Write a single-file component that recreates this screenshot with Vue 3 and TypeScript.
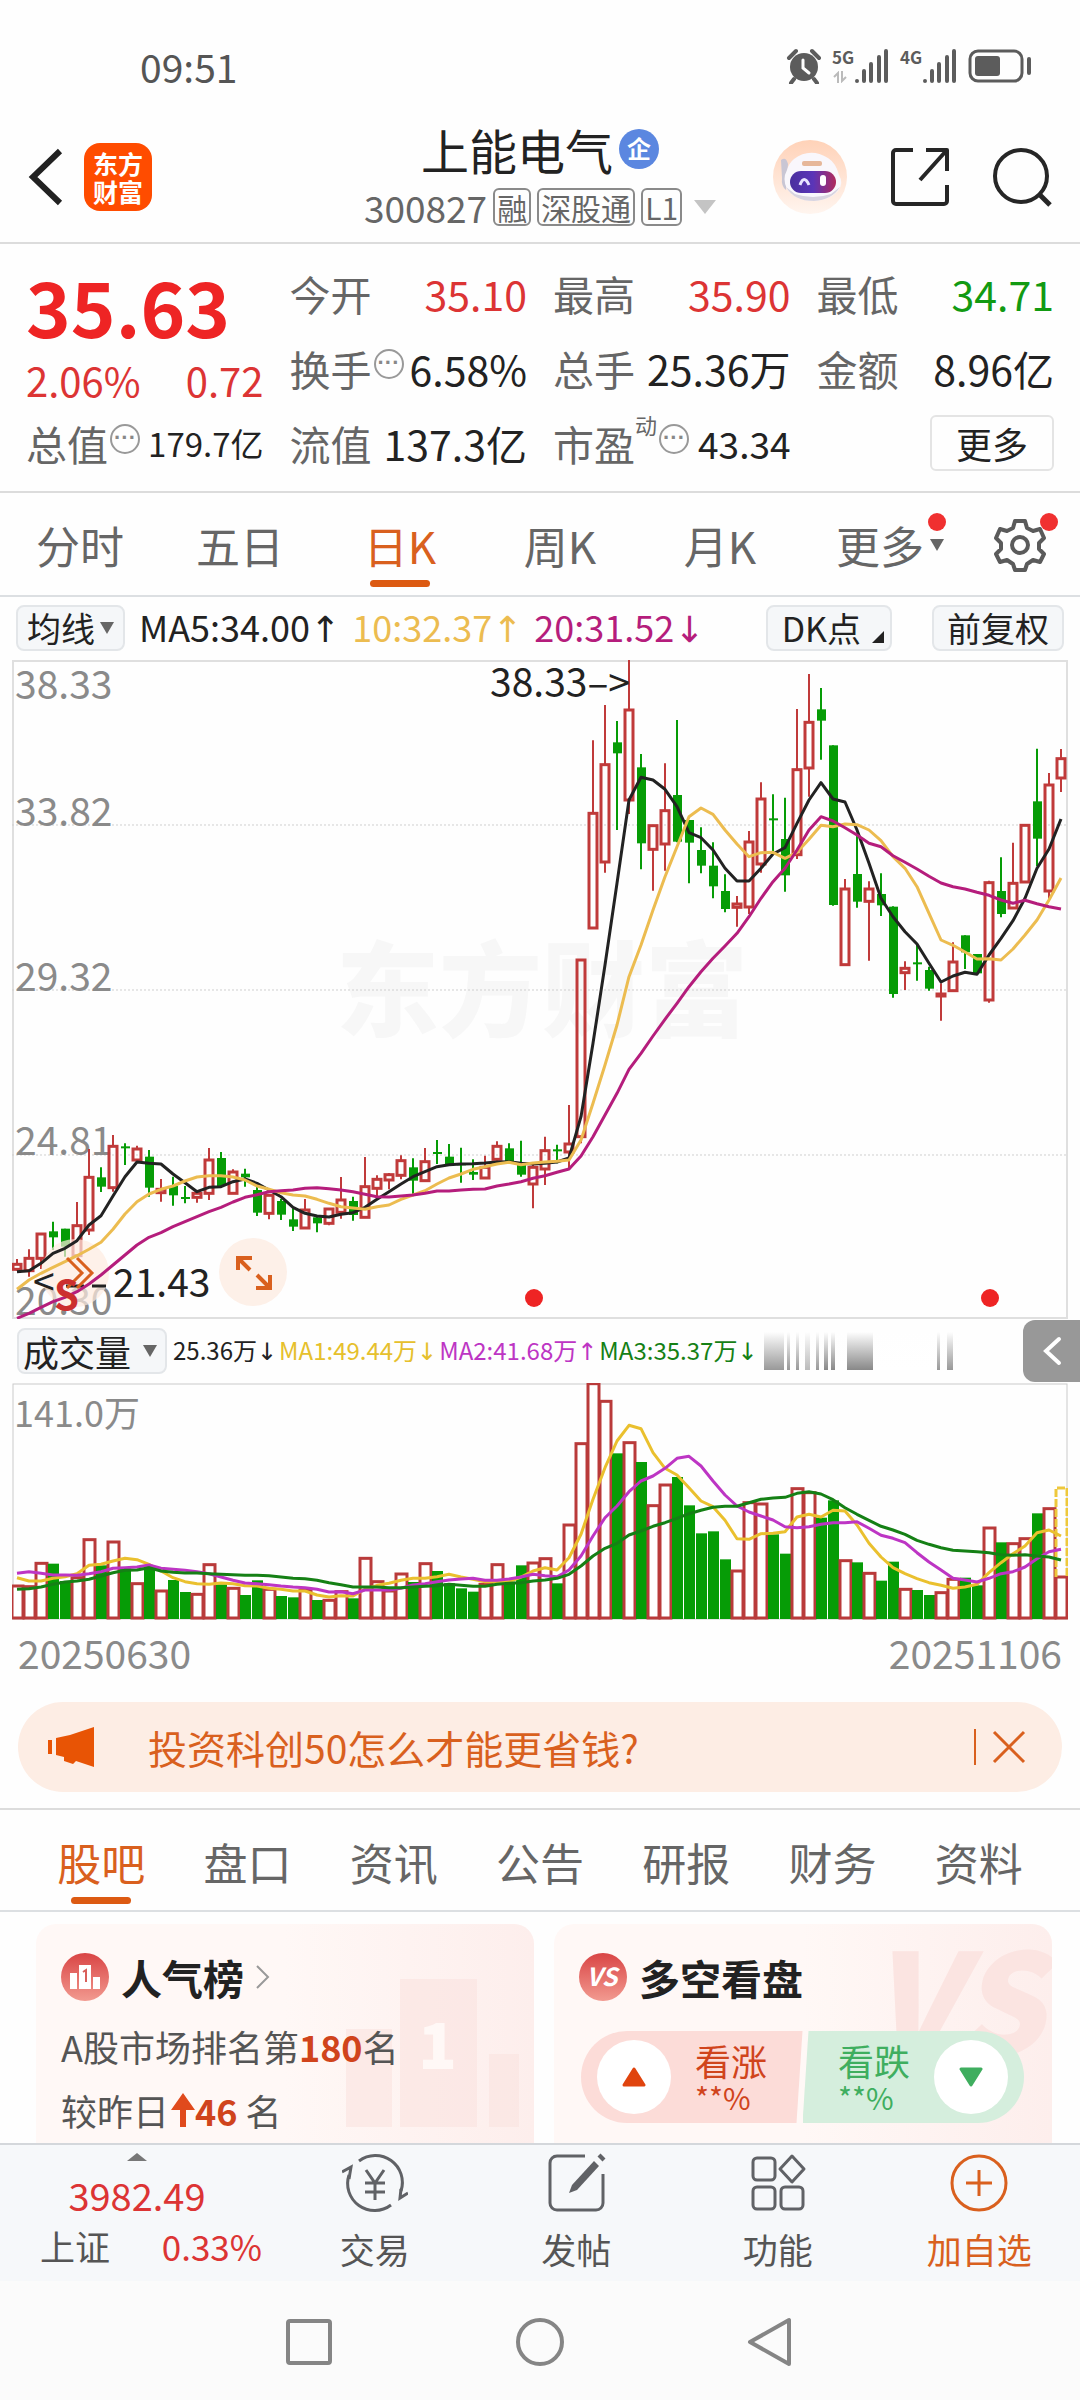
<script setup lang="ts">
import { ref } from 'vue'

type Bar = [high: number, top: number, bottom: number, low: number, up: 0 | 1]

const STEP = 12
const UNIT = 3
const LOWER = 1260

const centre = (i: number) => 5 + STEP * i

// Quiet sessions, measured from the lower band of the chart.
const quietBars: Bar[] = [
  [537, 553, 568, 572, 1], [508, 535, 572, 590, 1], [460, 462, 535, 567, 1], [425, 454, 472, 510, 0],
  [446, 446, 500, 530, 0], [366, 437, 527, 530, 1], [207, 292, 450, 465, 1], [262, 292, 320, 336, 0],
  [165, 199, 323, 335, 1], [190, 199, 205, 255, 0], [197, 207, 240, 247, 1], [210, 230, 323, 350, 0],
  [297, 328, 338, 365, 1], [290, 318, 346, 377, 0], [318, 351, 357, 370, 0], [335, 340, 352, 368, 1],
  [204, 240, 340, 360, 1], [216, 234, 318, 320, 0], [268, 276, 340, 342, 1], [266, 281, 292, 320, 0],
  [310, 330, 398, 408, 0], [342, 346, 400, 418, 1], [356, 363, 404, 420, 0], [385, 418, 440, 453, 0],
  [357, 390, 444, 446, 1], [410, 412, 430, 457, 0], [385, 387, 430, 436, 1], [291, 360, 397, 416, 1],
  [350, 363, 405, 422, 0], [231, 320, 412, 414, 1], [286, 298, 325, 350, 1], [279, 284, 300, 328, 1],
  [226, 242, 286, 298, 1], [235, 262, 302, 345, 0], [204, 245, 302, 304, 1], [180, 216, 222, 252, 0],
  [192, 230, 252, 255, 0], [203, 250, 256, 308, 0], [238, 276, 284, 300, 0], [227, 262, 294, 296, 1],
  [184, 199, 238, 242, 1], [190, 205, 245, 246, 0], [182, 250, 284, 290, 0], [255, 262, 312, 385, 1],
  [170, 212, 267, 315, 1], [194, 208, 214, 250, 0], [75, 192, 216, 265, 1],
]

const activeBars: Bar[] = [
  [900, 900, 1430, 1450, 1],
  [241, 460, 804, 804, 1], [135, 314, 606, 638, 1], [183, 247, 280, 510, 0], [0, 150, 420, 462, 1],
  [282, 322, 550, 628, 0], [495, 497, 568, 692, 1], [310, 452, 552, 632, 1], [180, 405, 545, 547, 0],
  [480, 480, 548, 670, 0], [502, 570, 617, 640, 0], [547, 617, 679, 715, 0], [643, 693, 747, 757, 0],
  [708, 732, 742, 800, 1], [513, 546, 741, 762, 1], [367, 417, 612, 638, 1], [403, 475, 481, 575, 0],
  [413, 537, 646, 695, 0], [147, 329, 584, 597, 1], [42, 187, 324, 410, 1], [84, 148, 182, 299, 0],
  [256, 256, 735, 737, 0], [657, 687, 914, 915, 1], [526, 642, 725, 743, 0], [664, 687, 724, 902, 1],
  [640, 702, 736, 768, 0], [739, 740, 1002, 1013, 0], [904, 925, 938, 990, 1], [855, 907, 913, 962, 0],
  [920, 930, 986, 992, 0], [970, 1002, 1008, 1082, 1], [847, 906, 992, 994, 1], [826, 826, 877, 927, 0],
  [882, 882, 940, 942, 0], [662, 668, 1020, 1028, 1], [592, 693, 762, 772, 0], [548, 670, 744, 745, 1],
  [494, 496, 666, 667, 1], [266, 424, 536, 618, 0], [339, 375, 693, 718, 1], [267, 296, 354, 396, 1],
]

const toCandle = (bar: Bar, i: number, base: number) => ({
  x: centre(i),
  high: (base + bar[0]) / UNIT,
  top: (base + bar[1]) / UNIT,
  bottom: (base + bar[2]) / UNIT,
  low: (base + bar[3]) / UNIT,
  up: bar[4] === 1,
})

const candles = [
  ...quietBars.map((b, i) => toCandle(b, i, LOWER)),
  ...activeBars.map((b, i) => toCandle(b, i + quietBars.length, 0)),
]

const points = (values: number[]) =>
  values.map((v, i) => `${centre(i)},${(v / UNIT).toFixed(1)}`).join(' ')

const average = (quiet: number[], active: number[]) => points([...quiet.map((v) => v + LOWER), ...active])

const ma5 = average(
  [575, 572, 550, 520, 505, 482, 435, 407, 348, 290, 246, 250, 252, 282, 308, 335, 322, 320, 305, 297, 310, 330, 350, 382,
    400, 408, 411, 403, 398, 382, 358, 335, 312, 290, 275, 260, 254, 252, 251, 249, 246, 245, 250, 252, 250, 246],
  [1494, 1370, 1150, 915, 670, 420, 352, 360, 388, 440, 518, 533, 570, 625, 663, 663, 625, 582, 563, 490, 420, 368, 417,
    426, 510, 610, 715, 770, 815, 852, 910, 966, 948, 937, 943, 885, 835, 782, 715, 625, 567, 477],
)
const ma10 = average(
  [628, 600, 580, 562, 545, 527, 508, 487, 448, 402, 365, 342, 328, 318, 303, 291, 287, 287, 291, 300, 318, 328, 338, 345,
    348, 358, 370, 380, 384, 388, 380, 375, 358, 345, 332, 312, 294, 282, 268, 260, 252, 247, 254, 249, 246, 244],
  [1500, 1440, 1330, 1215, 1095, 950, 855, 750, 650, 560, 470, 444, 463, 510, 552, 590, 578, 577, 595, 577, 538, 496, 500,
    492, 494, 510, 542, 590, 625, 680, 760, 840, 856, 876, 897, 896, 900, 867, 825, 780, 720, 654],
)
const ma20 = average(
  [715, 700, 682, 665, 652, 635, 612, 585, 555, 525, 495, 472, 458, 440, 425, 410, 395, 382, 366, 352, 344, 335, 332, 330,
    325, 323, 326, 330, 335, 343, 350, 351, 348, 345, 340, 333, 333, 330, 328, 327, 318, 312, 305, 295, 287, 277],
  [1527, 1488, 1430, 1365, 1300, 1228, 1180, 1128, 1078, 1030, 980, 935, 895, 858, 820, 770, 715, 665, 625, 570, 510, 470,
    483, 503, 525, 550, 560, 587, 607, 627, 649, 669, 680, 687, 697, 706, 720, 730, 721, 731, 740, 747],
)

const priceLabels = [
  { text: '38.33', y: 39 },
  { text: '33.82', y: 166 },
  { text: '29.32', y: 331 },
  { text: '24.81', y: 495 },
  { text: '20.30', y: 655 },
]
const gridLines = [165, 330, 495]

const VOLUME_TOP = 36
const volumeTops = [
  645, 647, 577, 578, 630, 620, 506, 583, 513, 592, 638, 585, 660, 627, 663, 670, 581, 640, 652, 672, 628, 655, 675, 679,
  658, 687, 688, 662, 682, 562, 632, 660, 609, 633, 578, 600, 637, 652, 662, 640, 581, 632, 583, 576, 563, 637, 462, 218,
  38, 91, 247, 215, 273, 404, 342, 318, 403, 487, 481, 565, 600, 395, 399, 490, 548, 353, 365, 440, 388, 569, 574, 607,
  629, 572, 655, 657, 672, 665, 625, 620, 643, 471, 514, 518, 503, 427, 413, 618,
]
const volumes = volumeTops.map((v, i) => ({
  x: centre(i),
  y: (v - VOLUME_TOP) / UNIT,
  up: candles[i].up,
}))

const volumeLine = (values: number[]) => points(values.map((v) => v - VOLUME_TOP))
const vol1 = volumeLine([
  620, 630, 630, 622, 617, 608, 583, 580, 570, 562, 566, 580, 600, 620, 632, 638, 640, 636, 638, 644, 645, 652, 655, 660,
  660, 672, 678, 674, 675, 655, 643, 637, 628, 622, 622, 617, 610, 618, 625, 632, 632, 632, 618, 600, 590, 597, 560, 490,
  385, 290, 210, 163, 173, 245, 292, 312, 350, 390, 407, 448, 503, 505, 488, 487, 482, 438, 430, 438, 418, 420, 462, 517,
  558, 590, 608, 623, 635, 643, 652, 648, 640, 605, 575, 548, 525, 485, 477, 495,
])
const vol2 = volumeLine([
  607, 602, 607, 612, 612, 613, 608, 602, 592, 590, 588, 582, 592, 595, 598, 602, 608, 618, 628, 636, 638, 641, 645, 648,
  650, 655, 663, 662, 668, 657, 657, 657, 652, 642, 638, 632, 627, 624, 622, 628, 628, 624, 618, 610, 614, 617, 597, 555,
  495, 440, 405, 362, 330, 315, 292, 262, 256, 285, 330, 372, 405, 423, 435, 447, 467, 470, 467, 460, 455, 455, 452, 472,
  493, 502, 515, 545, 573, 597, 622, 627, 633, 622, 608, 602, 588, 563, 542, 535,
])
const vol3 = volumeLine([
  655, 653, 648, 640, 633, 630, 625, 615, 605, 598, 597, 590, 600, 604, 606, 606, 608, 610, 611, 613, 613, 614, 618, 622,
  623, 628, 635, 641, 648, 648, 648, 650, 650, 648, 646, 644, 640, 643, 646, 646, 640, 637, 635, 630, 627, 622, 610, 585,
  555, 532, 517, 492, 480, 466, 455, 442, 428, 418, 409, 406, 406, 395, 385, 381, 379, 367, 362, 369, 386, 410, 430, 448,
  466, 477, 490, 508, 520, 530, 538, 540, 542, 545, 551, 553, 551, 555, 558, 567,
])

const periods = ['分时', '五日', '日K', '周K', '月K']
const period = ref('日K')
const sections = ['股吧', '盘口', '资讯', '公告', '研报', '财务', '资料']
const section = ref('股吧')
const noticeOpen = ref(true)
</script>

<template>
  <div class="page">
    <div class="status">
      <span class="clock">09:51</span>
      <div class="signals">
        <svg width="36" height="36" viewBox="0 0 36 36" fill="#5c5c5c">
          <circle cx="18" cy="19" r="14" />
          <path d="M3 10l7-7M33 10l-7-7M8 31l-3 4M28 31l3 4" stroke="#5c5c5c" stroke-width="4" stroke-linecap="round" />
          <path d="M17 12v8l6 5" stroke="#fff" stroke-width="3" fill="none" stroke-linecap="round" />
        </svg>
        <div class="network">
          <span>5G</span>
          <svg class="arrows" width="18" height="12" viewBox="0 0 18 12"><path d="M6 12V2L2 6M10 0v10l4-4" stroke="#bbb" stroke-width="2" fill="none" /></svg>
        </div>
        <svg width="36" height="36" viewBox="0 0 36 36" stroke="#5c5c5c" stroke-width="4" stroke-linecap="round"><path d="M3 33v0M10 33v-10M17 33v-17M25 33v-24M32 33v-30" /></svg>
        <div class="network"><span>4G</span></div>
        <svg width="36" height="36" viewBox="0 0 36 36" stroke="#5c5c5c" stroke-width="4" stroke-linecap="round"><path d="M3 33v0M10 33v-10M17 33v-17M25 33v-24M32 33v-30" /></svg>
        <svg class="battery" width="64" height="36" viewBox="0 0 64 36" fill="none">
          <rect x="2" y="3" width="52" height="30" rx="8" stroke="#5c5c5c" stroke-width="3" />
          <rect x="7" y="8" width="25" height="20" rx="3" fill="#5c5c5c" />
          <path d="M61 11v14" stroke="#5c5c5c" stroke-width="4" stroke-linecap="round" />
        </svg>
      </div>
    </div>

    <header class="header">
      <div class="head-side">
        <button class="icon-btn" aria-label="返回">
          <svg width="36" height="60" viewBox="0 0 36 60" fill="none" stroke="#222" stroke-width="6"><path d="M32 4L5 30L32 56" /></svg>
        </button>
        <a class="logo" href="#home"><span>东方</span><span>财富</span></a>
      </div>
      <div class="stock">
        <h1>上能电气<span class="corp">企</span></h1>
        <div class="code-row">
          <span class="code">300827</span>
          <span class="tag">融</span>
          <span class="tag">深股通</span>
          <span class="tag">L1</span>
          <svg class="caret" width="22" height="14" viewBox="0 0 22 14"><path d="M0 0h22L11 14z" fill="#c4c4c4" /></svg>
        </div>
      </div>
      <div class="head-side end">
        <button class="icon-btn" aria-label="助手">
          <svg width="76" height="76" viewBox="0 0 76 76">
            <defs>
              <linearGradient id="halo" x1="0" y1="0" x2="0" y2="1"><stop offset="0" stop-color="#ffd2b8" /><stop offset="1" stop-color="#fff5ef" /></linearGradient>
              <linearGradient id="visor" x1="0" y1="0" x2="1" y2="0"><stop offset="0" stop-color="#4a2f9e" /><stop offset=".5" stop-color="#5a35b8" /><stop offset="1" stop-color="#b02a5c" /></linearGradient>
            </defs>
            <circle cx="38" cy="38" r="37" fill="url(#halo)" />
            <path d="M9 21q5-4 7 4l-2 26q-5-4-4-12z" fill="#c9c6d4" />
            <path d="M22 20Q38 8 56 19Q64 24 67 36Q72 44 66 52Q58 61 42 62Q24 62 15 50Q10 40 15 31Q17 24 22 20z" fill="#f9f7fc" />
            <path d="M14 48q8 14 28 14q18-1 26-14l-9 7q-18 6-36 0z" fill="#d8d4e0" />
            <rect x="30" y="22" width="20" height="5" rx="2" fill="#e6b79a" />
            <rect x="18" y="32" width="46" height="22" rx="11" fill="url(#visor)" />
            <path d="M28 46q4-11 9 0" fill="none" stroke="#e8e4ff" stroke-width="3" />
            <rect x="48" y="36" width="6" height="11" rx="3" fill="#fff" />
          </svg>
        </button>
        <button class="icon-btn" aria-label="分享">
          <svg width="60" height="60" viewBox="0 0 60 60" fill="none" stroke="#262626" stroke-width="4" stroke-linejoin="round"><path d="M23 3H6a3 3 0 0 0-3 3v48a3 3 0 0 0 3 3h48a3 3 0 0 0 3-3V38" /><path d="M36 3h21v21M56 4L30 33" /></svg>
        </button>
        <button class="icon-btn" aria-label="搜索">
          <svg width="60" height="60" viewBox="0 0 60 60" fill="none" stroke="#262626" stroke-width="4"><circle cx="29" cy="29" r="26" /><path d="M47 47l11 11" stroke-width="5" /></svg>
        </button>
      </div>
    </header>

    <section class="quote">
      <div class="col first">
        <strong class="price">35.63</strong>
        <div class="cell change"><span>2.06%</span><span>0.72</span></div>
        <div class="cell">
          <span class="name">总值<i class="dots">···</i></span><span class="small">179.7亿</span>
        </div>
      </div>
      <div class="col">
        <div class="cell"><span class="name">今开</span><span class="red">35.10</span></div>
        <div class="cell"><span class="name">换手<i class="dots">···</i></span><span>6.58%</span></div>
        <div class="cell"><span class="name">流值</span><span>137.3亿</span></div>
      </div>
      <div class="col">
        <div class="cell"><span class="name">最高</span><span class="red">35.90</span></div>
        <div class="cell"><span class="name">总手</span><span>25.36万</span></div>
        <div class="cell"><span class="name">市盈<sup>动</sup><i class="dots">···</i></span><span class="mid">43.34</span></div>
      </div>
      <div class="col">
        <div class="cell"><span class="name">最低</span><span class="green">34.71</span></div>
        <div class="cell"><span class="name">金额</span><span>8.96亿</span></div>
        <div class="cell more-cell"><button class="more">更多</button></div>
      </div>
    </section>

    <nav class="periods">
      <button v-for="p in periods" :key="p" class="tab" :class="{ on: p === period }" @click="period = p">{{ p }}</button>
      <button class="tab with-dot">更多<span class="tri" /><span class="dot" /></button>
      <button class="tab gear" aria-label="设置">
        <svg width="54" height="56" viewBox="0 0 54 56" fill="none" stroke="#5a5a5a" stroke-width="4" stroke-linejoin="round">
          <path d="M22 4h10l2 7l6 3l7-2l4 9l-5 5v6l5 5l-4 8l-7-2l-6 4l-2 6H22l-2-6l-6-4l-7 2l-4-8l5-5v-6l-5-5l4-9l7 2l6-3z" />
          <circle cx="27" cy="28" r="8" />
        </svg>
        <span class="dot" />
      </button>
    </nav>

    <div class="indicators">
      <button class="chip">均线<span class="tri" /></button>
      <div class="ma-values">
        <span class="black">MA5:34.00<b class="arrow">↑</b></span>
        <span class="gold">10:32.37<b class="arrow">↑</b></span>
        <span class="magenta">20:31.52<b class="arrow">↓</b></span>
      </div>
      <button class="chip dk">DK点<span class="corner" /></button>
      <button class="chip wide">前复权</button>
    </div>

    <div class="chart">
      <svg viewBox="0 0 1056 659" class="plot">
        <rect x="1" y="1" width="1054" height="657" fill="none" stroke="#dfdfdf" stroke-width="2" />
        <text class="watermark" x="324" y="369">东方财富</text>
        <line v-for="y in gridLines" :key="y" x1="0" x2="1056" :y1="y" :y2="y" stroke="#cfcfcf" stroke-dasharray="2 2" />
        <text v-for="l in priceLabels" :key="l.text" class="axis" x="3" :y="l.y">{{ l.text }}</text>
        <g v-for="c in candles" :key="c.x" :stroke="c.up ? '#c03a3a' : '#069c06'" stroke-width="3">
          <template v-if="c.up">
            <path :d="`M${c.x} ${c.high}V${c.top}M${c.x} ${c.bottom}V${c.low}`" stroke-width="2" />
            <rect :x="c.x - 4" :y="c.top" width="8" :height="c.bottom - c.top" fill="none" />
          </template>
          <template v-else>
            <path :d="`M${c.x} ${c.high}V${c.low}`" stroke-width="2" />
            <rect :x="c.x - 4" :y="c.top" width="9" :height="c.bottom - c.top" fill="#069c06" stroke="none" />
          </template>
        </g>
        <circle cx="63" cy="613" r="34" fill="#fdebe0" opacity=".7" />
        <text class="note" x="478" y="37">38.33–&gt;</text>
        <text class="note" x="21" y="636">&lt;</text>
        <path d="M54 626h18M80 626h14" stroke="#222" stroke-width="3" />
        <text class="note" x="101" y="637">21.43</text>
        <g fill="none" stroke-width="3" stroke-linejoin="round">
          <polyline :points="ma5" stroke="#222" />
          <polyline :points="ma10" stroke="#ecbc50" />
          <polyline :points="ma20" stroke="#b51d7c" />
        </g>
        <path d="M55 598l15 15l-15 15M65 598l15 15l-15 15" fill="none" stroke="#d9601e" stroke-width="3" />
        <text class="sell" x="42" y="650">S</text>
        <circle cx="522" cy="638" r="9" fill="#ee2424" />
        <circle cx="978" cy="638" r="9" fill="#ee2424" />
      </svg>
      <button class="expand" aria-label="展开">
        <svg width="68" height="68" viewBox="0 0 68 68" fill="none" stroke="#d9601e" stroke-width="4"><path d="M19 32V20h14M20 21l11 11M51 37v13H37M50 49L38 37" /></svg>
      </button>
    </div>

    <div class="volume-head">
      <button class="chip">成交量<span class="tri" /></button>
      <div class="vol-values">
        <span class="black">25.36万<b class="arrow">↓</b></span>
        <span class="yellow">MA1:49.44万<b class="arrow">↓</b></span>
        <span class="violet">MA2:41.68万<b class="arrow">↑</b></span>
        <span class="deep">MA3:35.37万<b class="arrow">↓</b></span>
      </div>
      <div class="streaks" />
      <button class="collapse" aria-label="收起">
        <svg width="20" height="30" viewBox="0 0 20 30" fill="none" stroke="#fff" stroke-width="4" stroke-linecap="round"><path d="M17 3L4 15L17 27" /></svg>
      </button>
    </div>

    <div class="volume">
      <svg viewBox="0 0 1056 237" class="plot">
        <rect x="1" y="1" width="1054" height="235" fill="none" stroke="#cacaca" />
        <text class="vol-axis" x="2" y="44">141.0万</text>
        <template v-for="v in volumes" :key="v.x">
          <rect v-if="v.up" :x="v.x - 5" :y="v.y" width="11" :height="235 - v.y" fill="#fff" stroke="#b93a3a" stroke-width="3" />
          <rect v-else :x="v.x - 5" :y="v.y" width="11" :height="236 - v.y" fill="#069c06" />
        </template>
        <path d="M1044 194V105h11v89" fill="none" stroke="#eec83c" stroke-width="3" stroke-dasharray="8 2" />
        <g fill="none" stroke-width="3" stroke-linejoin="round">
          <polyline :points="vol1" stroke="#eac02e" />
          <polyline :points="vol2" stroke="#bd35c4" />
          <polyline :points="vol3" stroke="#158015" />
        </g>
      </svg>
      <div class="dates"><span>20250630</span><span>20251106</span></div>
    </div>

    <div v-if="noticeOpen" class="notice">
      <svg width="46" height="42" viewBox="0 0 46 42" fill="#e85405"><path d="M0 14h4v14H0zM8 12l14-3L46 1v40l-18-6l-3 3l-9-3v-4l-8-2z" /></svg>
      <a href="#notice">投资科创50怎么才能更省钱?</a>
      <span class="bar" />
      <button class="icon-btn" aria-label="关闭" @click="noticeOpen = false">
        <svg width="34" height="34" viewBox="0 0 34 34" stroke="#d9601e" stroke-width="3"><path d="M2 2l30 30M32 2L2 32" /></svg>
      </button>
    </div>

    <nav class="sections">
      <button v-for="s in sections" :key="s" class="tab" :class="{ on: s === section }" @click="section = s">{{ s }}</button>
    </nav>

    <main class="cards">
      <article class="card">
        <svg class="deco" width="250" height="219" viewBox="0 0 250 219">
          <defs><linearGradient id="wash" x1="0" y1="0" x2="1" y2="0"><stop offset="0" stop-color="#fdeeec" stop-opacity="0" /><stop offset="1" stop-color="#fdeeec" /></linearGradient></defs>
          <rect width="250" height="219" fill="url(#wash)" />
          <path d="M116 55h77v148h-77zM62 105h46v98H62zM205 130h30v73h-30z" fill="#fae2df" opacity=".6" />
          <text x="134" y="145" font-size="64" font-weight="900" fill="#fff8f6">1</text>
        </svg>
        <h2>
          <svg width="48" height="48" viewBox="0 0 48 48">
            <defs><linearGradient id="badge" x1="0" y1="0" x2="0" y2="1"><stop offset="0" stop-color="#d94545" /><stop offset="1" stop-color="#f29a90" /></linearGradient></defs>
            <circle cx="24" cy="24" r="24" fill="url(#badge)" />
            <path d="M9 20h7v16H9zM18 12h12v24H18zM32 24h7v12h-7z" fill="#fff" />
            <path d="M22 19l3-2v12" fill="none" stroke="#d95f5a" stroke-width="2" />
          </svg>
          人气榜
          <svg width="14" height="24" viewBox="0 0 14 24" fill="none" stroke="#999" stroke-width="2"><path d="M1 1l11 11L1 23" /></svg>
        </h2>
        <p>A股市场排名第<b>180</b>名</p>
        <p>较昨日<svg class="up" width="24" height="34" viewBox="0 0 24 34" fill="#e04a1c"><path d="M12 0l12 17h-9v17H9V17H0z" /></svg><b>46</b> 名</p>
      </article>
      <article class="card">
        <svg class="deco" width="250" height="219" viewBox="0 0 250 219">
          <rect width="250" height="219" fill="url(#wash)" />
          <text x="66" y="130" font-size="138" font-style="italic" font-weight="900" fill="#fbe4e1">VS</text>
        </svg>
        <h2>
          <svg width="48" height="48" viewBox="0 0 48 48"><circle cx="24" cy="24" r="24" fill="url(#badge)" /><text x="23" y="33" text-anchor="middle" font-size="25" font-style="italic" font-weight="700" fill="#fff">VS</text></svg>
          多空看盘
        </h2>
        <div class="vote">
          <button class="bull">
            <span class="disc"><svg width="24" height="20" viewBox="0 0 24 20"><path d="M12 2L22 18H2z" fill="#e0440e" stroke="#e0440e" stroke-width="3" stroke-linejoin="round" /></svg></span>
            <span class="vote-text"><span>看涨</span><small>**%</small></span>
          </button>
          <button class="bear">
            <span class="vote-text"><span>看跌</span><small>**%</small></span>
            <span class="disc"><svg width="24" height="20" viewBox="0 0 24 20"><path d="M12 18L22 2H2z" fill="#3fae5f" stroke="#3fae5f" stroke-width="3" stroke-linejoin="round" /></svg></span>
          </button>
        </div>
      </article>
    </main>

    <footer class="dock">
      <button class="index">
        <svg width="20" height="8" viewBox="0 0 20 8"><path d="M0 8L10 0l10 8z" fill="#777" /></svg>
        <span class="points">3982.49</span>
        <span class="index-row"><span>上证</span><span class="red">0.33%</span></span>
      </button>
      <button class="action">
        <svg width="66" height="60" viewBox="0 0 66 60" fill="none" stroke="#606266" stroke-width="3">
          <path d="M17 8a27 27 0 0 1 42 30M49 52A27 27 0 0 1 7 22" /><path d="M0 19l9-5l-2 12M66 40l-8 5l1-9" />
          <path d="M24 17l9 13l9-13M33 30v17M23 30h20M23 39h20" />
        </svg>
        交易
      </button>
      <button class="action">
        <svg width="60" height="60" viewBox="0 0 60 60" fill="none" stroke="#606266" stroke-width="3"><path d="M39 3H11a7 7 0 0 0-7 7v40a7 7 0 0 0 7 7h39a7 7 0 0 0 7-7V21" /><path d="M23 40l3-8L48 8l5 5l-22 24z" fill="#606266" stroke="none" /><path d="M54 6l3-3" stroke-width="7" /></svg>
        发帖
      </button>
      <button class="action">
        <svg width="60" height="60" viewBox="0 0 60 60" fill="none" stroke="#606266" stroke-width="3"><rect x="5" y="5" width="22" height="22" rx="4" /><rect x="5" y="34" width="22" height="22" rx="4" /><rect x="33" y="34" width="22" height="22" rx="4" /><path d="M44 3l12 13l-12 13l-12-13z" stroke-linejoin="round" /></svg>
        功能
      </button>
      <button class="action hot">
        <svg width="60" height="60" viewBox="0 0 60 60" fill="none" stroke="#d9601e" stroke-width="3"><circle cx="30" cy="30" r="27" /><path d="M30 17v26M17 30h26" /></svg>
        加自选
      </button>
    </footer>

    <nav class="system">
      <button class="icon-btn" aria-label="最近任务"><svg width="50" height="50" viewBox="0 0 50 50" fill="none" stroke="#858585" stroke-width="4"><rect x="4" y="4" width="42" height="42" rx="2" /></svg></button>
      <button class="icon-btn" aria-label="主屏幕"><svg width="50" height="50" viewBox="0 0 50 50" fill="none" stroke="#858585" stroke-width="4"><circle cx="25" cy="25" r="22" /></svg></button>
      <button class="icon-btn" aria-label="后退"><svg width="50" height="50" viewBox="0 0 50 50" fill="none" stroke="#858585" stroke-width="4" stroke-linejoin="round"><path d="M43 3v44L4 25z" /></svg></button>
    </nav>
  </div>
</template>

<style>
body {
  background: #fff;
}
</style>

<style scoped>
.page {
  font-family: "Noto Sans CJK SC", "Noto Sans", sans-serif;
  color: #222;
  background: #fefefe;
}
.page *,
.page {
  box-sizing: border-box;
}
button {
  font-family: inherit;
  font-size: inherit;
  color: inherit;
  background: none;
  border: 0;
  padding: 0;
  margin: 0;
  line-height: inherit;
}
a {
  color: inherit;
  text-decoration: none;
}
h1,
h2,
p {
  margin: 0;
}
svg {
  display: block;
}
.red {
  color: #dc3434;
}
.green {
  color: #129a12;
}
.black {
  color: #222;
}
.gold {
  color: #ecbc50;
}
.magenta {
  color: #b51d7c;
}
.yellow {
  color: #e6c02c;
}
.violet {
  color: #bd35c4;
}
.deep {
  color: #158015;
}
.arrow {
  font-family: "DejaVu Sans", sans-serif;
  font-weight: 400;
}

.status {
  display: flex;
  justify-content: space-between;
  align-items: center;
  padding: 36px 48px 31px 140px;
}
.clock {
  font-size: 39px;
  line-height: 60px;
  color: #555;
}
.signals {
  display: flex;
  align-items: center;
}
.network {
  width: 22px;
  height: 36px;
  margin-left: 10px;
  font-size: 17px;
  font-weight: 700;
  line-height: 18px;
  color: #5c5c5c;
}
.arrows {
  margin-top: 5px;
}
.battery {
  margin-left: 10px;
}

.header {
  display: grid;
  grid-template-columns: 1fr auto 1fr;
  align-items: center;
  padding: 0 28px 16px;
  border-bottom: 2px solid #dcdcdc;
}
.head-side {
  display: flex;
  align-items: center;
  gap: 20px;
}
.head-side.end {
  justify-content: flex-end;
  gap: 42px;
}
.logo {
  display: flex;
  flex-direction: column;
  justify-content: center;
  align-items: center;
  width: 68px;
  height: 68px;
  border-radius: 16px;
  background: #ff4c00;
  color: #fff;
  font-weight: 700;
  font-size: 25px;
  line-height: 28px;
}
.stock {
  display: flex;
  flex-direction: column;
  align-items: center;
}
h1 {
  display: flex;
  align-items: center;
  gap: 6px;
  font-size: 48px;
  font-weight: 400;
  line-height: 44px;
  padding-bottom: 17px;
}
.corp {
  width: 40px;
  height: 40px;
  border-radius: 50%;
  background: #5b87e0;
  color: #fff;
  font-size: 24px;
  line-height: 38px;
  font-weight: 700;
  text-align: center;
}
.code-row {
  display: flex;
  align-items: center;
  gap: 6px;
  color: #666;
}
.code {
  font-size: 37px;
  line-height: 38px;
}
.tag {
  border: 2px solid #8a8a8a;
  border-radius: 6px;
  padding: 0 2px;
  font-size: 30px;
  line-height: 34px;
}
.caret {
  margin-left: 6px;
}
.page .icon-btn {
  display: block;
}

.quote {
  display: grid;
  grid-template-columns: repeat(4, 1fr);
  gap: 26px;
  padding: 11px 26px;
  border-bottom: 2px solid #dcdcdc;
}
.cell {
  display: flex;
  justify-content: space-between;
  align-items: center;
  height: 75px;
  font-size: 41px;
  line-height: 60px;
  white-space: nowrap;
}
.name {
  display: flex;
  align-items: center;
  color: #666;
}
.price {
  display: block;
  font-size: 76px;
  line-height: 100px;
  color: #ee2424;
}
.change {
  font-size: 40px;
  height: 50px;
  color: #dc3434;
}
.small {
  font-size: 33px;
}
.mid {
  font-size: 37px;
}
.dots {
  width: 30px;
  height: 30px;
  margin: 0 0 8px 2px;
  border: 2px solid #999;
  border-radius: 50%;
  font: 700 22px/24px "Liberation Sans", sans-serif;
  text-align: center;
  color: #888;
}
sup {
  font-size: 22px;
  line-height: 22px;
  align-self: flex-start;
}
.more-cell {
  justify-content: flex-end;
}
.more {
  width: 124px;
  border: 2px solid #e4e4e4;
  border-radius: 6px;
  font-size: 36px;
  line-height: 52px;
}

.periods,
.sections {
  display: flex;
  border-bottom: 2px solid #dcdfe2;
}
.periods {
  padding: 12px 0 8px;
}
.tab {
  position: relative;
  flex: 1 1 0;
  padding: 10px 0 12px;
  font-size: 44px;
  line-height: 60px;
  color: #666;
  text-align: center;
}
.tab.on {
  color: #d9601e;
}
.tab.on::after {
  content: "";
  position: absolute;
  left: calc(50% - 30px);
  bottom: 0;
  width: 60px;
  height: 7px;
  border-radius: 4px;
  background: #dc5a12;
}
.tri {
  display: inline-block;
  border: 7px solid transparent;
  border-top: 12px solid #666;
  border-bottom: 0;
}
.with-dot .tri {
  position: absolute;
  right: 16px;
  top: 34px;
}
.dot {
  position: absolute;
  right: 14px;
  top: 8px;
  width: 18px;
  height: 18px;
  border-radius: 50%;
  background: #f03030;
}
.tab.gear {
  display: flex;
  flex-grow: 0.75;
  justify-content: center;
  align-items: center;
}
.gear .dot {
  right: 22px;
}

.indicators,
.volume-head {
  display: flex;
  align-items: center;
}
.indicators {
  padding: 8px 16px 9px;
  gap: 14px;
}
.chip {
  display: flex;
  align-items: center;
  gap: 5px;
  padding: 0 9px;
  border: 2px solid #e3e6e9;
  border-radius: 8px;
  background: #f5f7f9;
  font-size: 34px;
  line-height: 42px;
  white-space: nowrap;
}
.ma-values {
  display: flex;
  gap: 12px;
  font-size: 36px;
  line-height: 42px;
  white-space: nowrap;
}
.dk {
  margin-left: auto;
  margin-right: 26px;
  padding: 0 6px 0 14px;
}
.wide {
  padding: 0 13px;
}
.corner {
  align-self: flex-end;
  margin: 0 0 6px 6px;
  border-left: 12px solid transparent;
  border-bottom: 12px solid #222;
}

.chart {
  position: relative;
  padding: 0 12px;
}
.plot {
  width: 100%;
  height: auto;
}
.axis {
  font-size: 39px;
  fill: #8a8a8a;
}
.vol-axis {
  font-size: 36px;
  fill: #8a8a8a;
}
.note {
  font-size: 39px;
  fill: #222;
}
.sell {
  font-size: 40px;
  font-weight: 700;
  fill: #cc2f2f;
}
.watermark {
  font-size: 103px;
  font-weight: 900;
  fill: #f7f7f7;
}
.expand {
  position: absolute;
  left: calc(20% + 3px);
  bottom: 2%;
  width: 68px;
  height: 68px;
  border-radius: 50%;
  background: #fdf0e8;
}

.volume-head {
  padding: 1px 0 1px 17px;
  gap: 6px;
}
.volume-head .chip {
  gap: 12px;
  padding: 0 8px 0 4px;
  font-size: 36px;
}
.vol-values {
  display: flex;
  gap: 2px;
  font-size: 24px;
  line-height: 36px;
  white-space: nowrap;
}
.streaks {
  width: 196px;
  height: 38px;
  background:
    linear-gradient(#fefefe, transparent),
    linear-gradient(90deg, #999 0 20px, #fff 20px 23px, #999 23px 26px, #fff 26px 32px, #999 32px 35px, #fff 35px 41px, #bbb 41px 46px, #fff 46px 52px, #999 52px 55px, #fff 55px 60px, #888 60px 64px, #fff 64px 67px, #888 67px 71px, #fff 71px 83px, #888 83px 109px, #fff 109px 173px, #999 173px 176px, #fff 176px 183px, #999 183px 189px, #fff 189px);
}
.collapse {
  display: flex;
  align-items: center;
  justify-content: center;
  width: 57px;
  height: 62px;
  margin-left: auto;
  border-radius: 12px 0 0 12px;
  background: #989898;
}
.volume {
  padding: 0 12px;
}
.dates {
  display: flex;
  justify-content: space-between;
  padding: 7px 6px 25px;
  font-size: 39px;
  line-height: 50px;
  color: #8a8a8a;
}

.notice {
  display: flex;
  align-items: center;
  margin: 0 18px 16px;
  padding: 15px 36px 15px 30px;
  border-radius: 45px;
  background: #fdede4;
  color: #d9601e;
  font-size: 39px;
  line-height: 60px;
}
.notice a {
  margin-left: 54px;
  flex: 1;
}
.bar {
  width: 2px;
  height: 36px;
  margin-right: 16px;
  background: #d9601e;
}

.sections {
  padding: 12px 28px 6px;
  border-top: 2px solid #dcdcdc;
}

.cards {
  display: grid;
  grid-template-columns: 1fr 1fr;
  gap: 20px;
  padding: 12px 28px 0 36px;
}
.card {
  position: relative;
  overflow: hidden;
  height: 219px;
  padding: 23px 26px 0 25px;
  border-radius: 20px 20px 0 0;
  background: #fff8f6;
}
.deco {
  position: absolute;
  right: 0;
  top: 0;
}
h2 {
  position: relative;
  display: flex;
  align-items: center;
  gap: 12px;
  padding-bottom: 3px;
  font-size: 41px;
  line-height: 60px;
  font-weight: 700;
}
.card p {
  position: relative;
  display: flex;
  align-items: center;
  padding-top: 8px;
  font-size: 36px;
  line-height: 56px;
  color: #555;
  white-space: pre;
}
.card p b {
  color: #d0441c;
}
.up {
  margin-left: 2px;
}
.vote {
  position: relative;
  display: flex;
  margin: 21px 2px 0;
}
.vote button {
  flex: 1;
  display: flex;
  align-items: center;
  gap: 24px;
  padding: 9px 16px;
}
.page .bull {
  border-radius: 46px 0 0 46px;
  background: #fcdcd8;
  color: #d0441c;
  clip-path: polygon(0 0, 100% 0, calc(100% - 6px) 100%, 0 100%);
}
.page .bear {
  justify-content: flex-end;
  border-radius: 0 46px 46px 0;
  background: #d5eedd;
  color: #3fae5f;
  clip-path: polygon(6px 0, 100% 0, 100% 100%, 0 100%);
}
.disc {
  display: flex;
  align-items: center;
  justify-content: center;
  width: 74px;
  height: 74px;
  border-radius: 50%;
  background: #fff;
}
.vote-text {
  display: flex;
  flex-direction: column;
  align-items: flex-start;
  font-size: 36px;
  line-height: 40px;
}
.vote-text small {
  font-size: 30px;
  line-height: 34px;
}

.dock {
  display: grid;
  grid-template-columns: 274px repeat(4, 1fr);
  border-top: 2px solid #d4d7db;
  background: #f6f8fa;
  color: #555;
  font-size: 35px;
}
.index {
  display: flex;
  flex-direction: column;
  align-items: center;
  padding: 8px 0 10px;
}
.points {
  font-size: 38px;
  line-height: 52px;
  padding-top: 8px;
  color: #dc3434;
}
.index-row {
  display: flex;
  align-self: stretch;
  justify-content: space-between;
  padding: 0 12px 0 40px;
  font-size: 35px;
  line-height: 50px;
}
.action {
  display: flex;
  flex-direction: column;
  align-items: center;
  gap: 12px;
  padding: 8px 0;
  line-height: 48px;
}
.page .hot {
  color: #d9601e;
}

.system {
  display: flex;
  justify-content: space-between;
  padding: 36px 284px;
  background: #fbfbfb;
}
</style>
